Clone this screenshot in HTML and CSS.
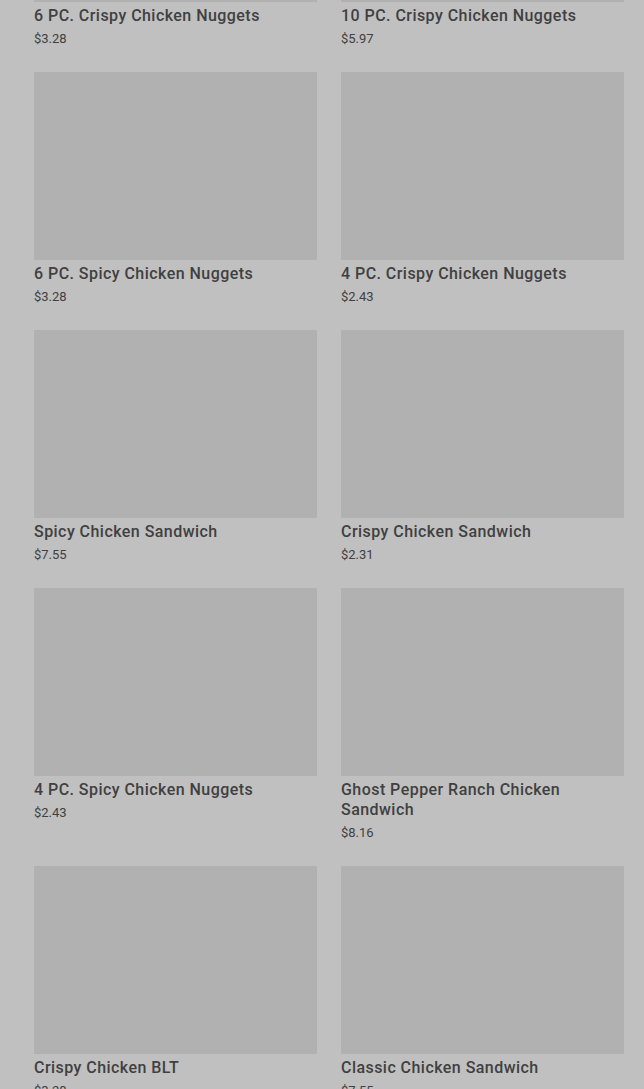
FILE: index.html
```html
<!DOCTYPE html>
<html lang="en">
<head>
  <meta charset="UTF-8" />
  <title>Menu</title>
  <meta name="viewport" content="width=device-width, initial-scale=1.0"/>
  <link rel="stylesheet" href="styles.css">
</head>
<body>
  <div class="menu-grid">
    <div class="item">
      <div class="item-img"></div>
      <div class="item-name">6 PC. Crispy Chicken Nuggets</div>
      <div class="item-price">$3.28</div>
    </div>
    <div class="item">
      <div class="item-img"></div>
      <div class="item-name">10 PC. Crispy Chicken Nuggets</div>
      <div class="item-price">$5.97</div>
    </div>
    <div class="item">
      <div class="item-img"></div>
      <div class="item-name">6 PC. Spicy Chicken Nuggets</div>
      <div class="item-price">$3.28</div>
    </div>
    <div class="item">
      <div class="item-img"></div>
      <div class="item-name">4 PC. Crispy Chicken Nuggets</div>
      <div class="item-price">$2.43</div>
    </div>
    <div class="item">
      <div class="item-img"></div>
      <div class="item-name">Spicy Chicken Sandwich</div>
      <div class="item-price">$7.55</div>
    </div>
    <div class="item">
      <div class="item-img"></div>
      <div class="item-name">Crispy Chicken Sandwich</div>
      <div class="item-price">$2.31</div>
    </div>
    <div class="item">
      <div class="item-img"></div>
      <div class="item-name">4 PC. Spicy Chicken Nuggets</div>
      <div class="item-price">$2.43</div>
    </div>
    <div class="item">
      <div class="item-img"></div>
      <div class="item-name">Ghost Pepper Ranch Chicken Sandwich</div>
      <div class="item-price">$8.16</div>
    </div>
    <div class="item">
      <div class="item-img"></div>
      <div class="item-name">Crispy Chicken BLT</div>
      <div class="item-price">$3.28</div>
    </div>
    <div class="item">
      <div class="item-img"></div>
      <div class="item-name">Classic Chicken Sandwich</div>
      <div class="item-price">$7.55</div>
    </div>
  </div>
</body>
</html>
```

FILE: styles.css
```css
:root {
  --bg: #c0c0c0;
  --img: #b1b1b1;
  --text: #404040;
}
body {
  font-family: Roboto, 'Noto Sans', sans-serif;
  background-color: var(--bg);
  color: var(--text);
  margin: 0;
  overflow: hidden;
}
.menu-grid {
  display: grid;
  grid-template-columns: 283px 283px;
  column-gap: 24px;
  row-gap: 24px;
  align-items: start;
  padding: 0 20px 0 34px;
  margin-top: -186px;
}
.item-img {
  height: 188px;
  background-color: var(--img);
}
.item-name {
  font-size: 16px;
  font-weight: 500;
  line-height: 20px;
  letter-spacing: 0.45px;
  margin-top: 4px;
}
.item-price {
  font-size: 13px;
  line-height: 18px;
  margin-top: 4px;
}
```
